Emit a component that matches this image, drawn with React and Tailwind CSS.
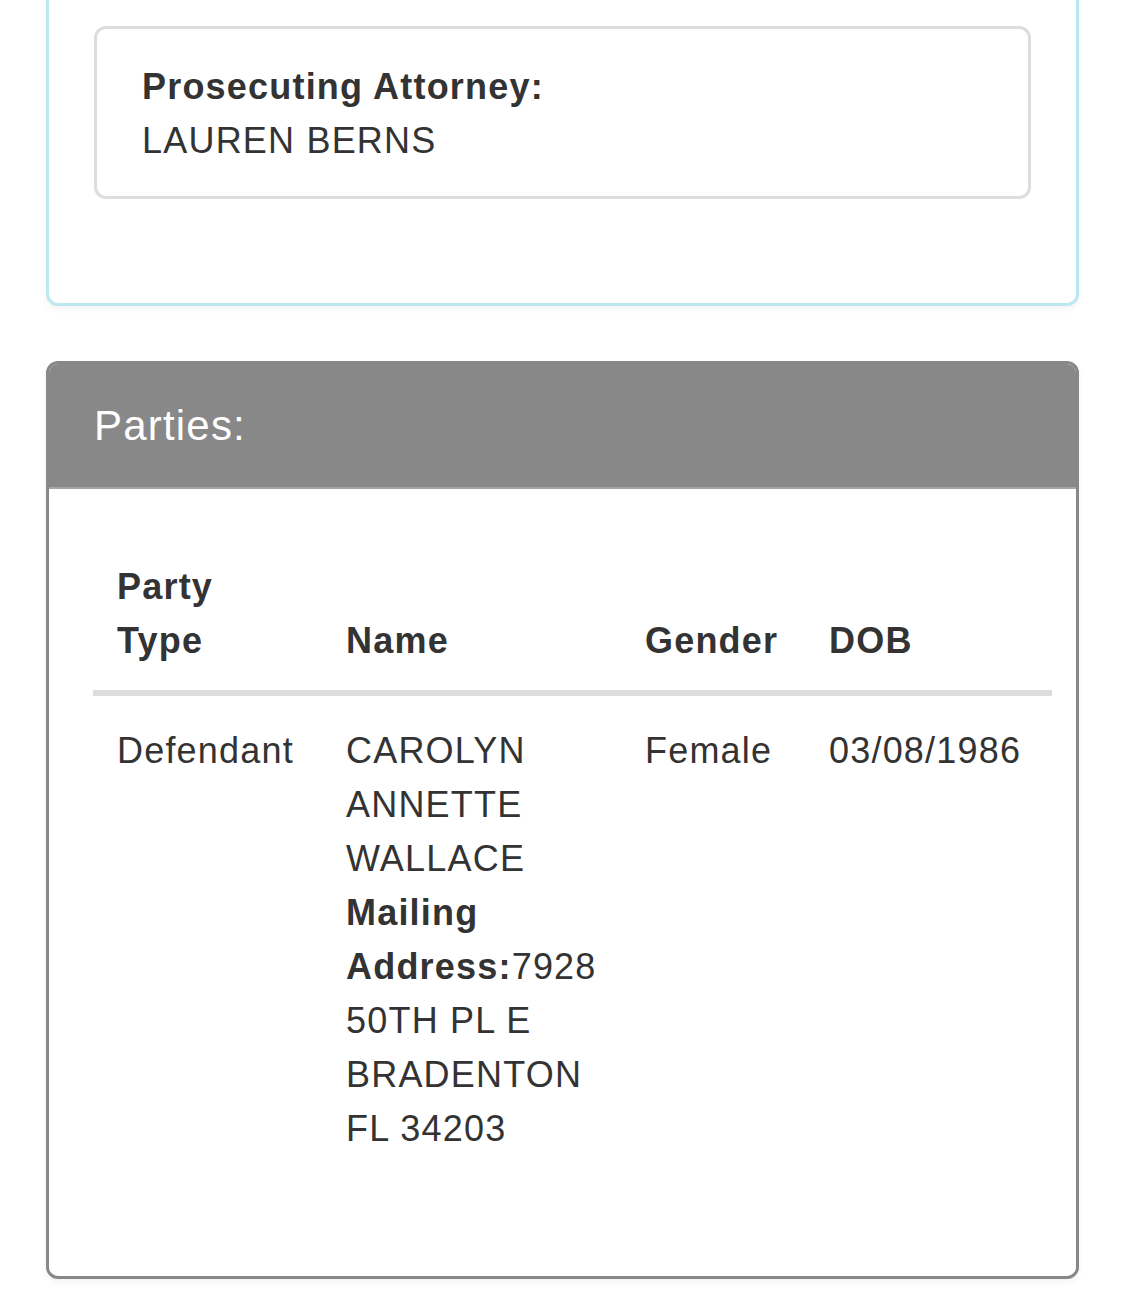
import React from "react";

const parties = [
  {
    type: "Defendant",
    name: "CAROLYN ANNETTE WALLACE",
    address: "7928 50TH PL E BRADENTON FL 34203",
    gender: "Female",
    dob: "03/08/1986",
  },
];

export default function App() {
  return (
    <div
      className="min-h-screen bg-white px-[46px] pb-[17px] text-[#333] text-[36px] leading-[54px] tracking-[1.2px]"
      style={{ fontFamily: '"Liberation Sans", Arial, Helvetica, sans-serif' }}
    >
      {/* case info card, scrolled partly out of view */}
      <div className="-mt-[22px] rounded-[12px] border-[3px] border-[#bce8f1] bg-white px-[45px] pt-[45px] pb-[104px] shadow-[0_3px_6px_rgba(0,0,0,0.05)]">
        <div className="rounded-[12px] border-[3px] border-[#ddd] px-[45px] pt-[31px] pb-[28px]">
          <p className="font-bold">Prosecuting Attorney:</p>
          <p>LAUREN BERNS</p>
        </div>
      </div>

      {/* parties panel */}
      <div className="mt-[55px] overflow-hidden rounded-[12px] border-[3px] border-[#888] bg-white shadow-[0_3px_6px_rgba(0,0,0,0.05)]">
        <div className="bg-[#888] border-b-[2px] border-b-[#a5a5a5] px-[45px] pt-[33px] pb-[32px] text-[42px] leading-[58px] text-white">
          Parties:
        </div>
        <div className="pl-[44px] pr-[24px] pt-[47px] pb-[96px]">
          <table className="w-full table-fixed border-collapse text-left">
            <colgroup>
              <col className="w-[229px]" />
              <col className="w-[299px]" />
              <col className="w-[184px]" />
              <col />
            </colgroup>
            <thead>
              <tr className="border-b-[6px] border-b-[#ddd]">
                <th className="px-[24px] pt-[24px] pb-[22px] align-bottom font-bold">Party Type</th>
                <th className="px-[24px] pt-[24px] pb-[22px] align-bottom font-bold">Name</th>
                <th className="px-[24px] pt-[24px] pb-[22px] align-bottom font-bold">Gender</th>
                <th className="px-[24px] pt-[24px] pb-[22px] align-bottom font-bold">DOB</th>
              </tr>
            </thead>
            <tbody>
              {parties.map((p) => (
                <tr key={p.name} className="align-top">
                  <td className="px-[24px] pt-[28px] pb-[24px]">{p.type}</td>
                  <td className="px-[24px] pt-[28px] pb-[24px]">
                    {p.name}
                    <br />
                    <b>Mailing Address:</b>
                    {p.address}
                  </td>
                  <td className="px-[24px] pt-[28px] pb-[24px]">{p.gender}</td>
                  <td className="px-[24px] pt-[28px] pb-[24px]">{p.dob}</td>
                </tr>
              ))}
            </tbody>
          </table>
        </div>
      </div>
    </div>
  );
}
